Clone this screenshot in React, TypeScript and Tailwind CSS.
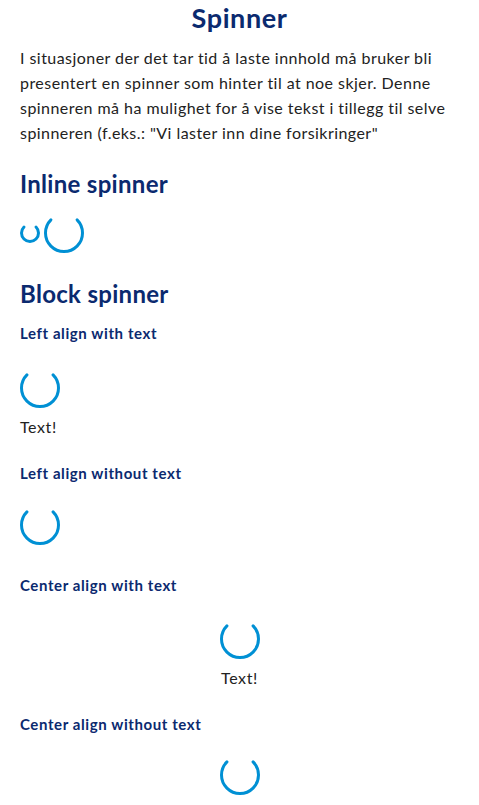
import React from "react";

const BLUE = "#0090d4";

function Spinner({ size = 40 }: { size?: number }) {
  const sw = 3;
  const r = size / 2 - sw / 2;
  const c = size / 2;
  const d = r * Math.SQRT1_2;
  return (
    <svg width={size} height={size} viewBox={`0 0 ${size} ${size}`} className="block shrink-0">
      <path
        d={`M ${c - d} ${c - d} A ${r} ${r} 0 1 0 ${c + d} ${c - d}`}
        fill="none"
        stroke={BLUE}
        strokeWidth={sw}
        strokeLinecap="round"
      />
    </svg>
  );
}

export default function App() {
  return (
    <div
      className="px-5 pt-[1px] bg-white min-h-[805px] text-[#222]"
      style={{ fontFamily: "Lato, 'Open Sans', sans-serif" }}
    >
      <h1 className="text-[27px] leading-[33px] font-bold text-center text-[#0b2a6f] tracking-[0.6px]">Spinner</h1>
      <p className="mt-[11px] text-[16px] leading-[25px] tracking-[0.45px]">
        I situasjoner der det tar tid å laste innhold må bruker bli presentert en spinner som hinter til at noe
        skjer. Denne spinneren må ha mulighet for å vise tekst i tillegg til selve spinneren (f.eks.: "Vi laster
        inn dine forsikringer"
      </p>
      <h2 className="mt-[24px] text-[24px] leading-[30px] font-bold text-[#0b2a6f] tracking-[0.3px]">Inline spinner</h2>
      <div className="mt-[14px] flex items-center gap-1 h-[40px]">
        <Spinner size={20} />
        <Spinner size={40} />
      </div>
      <h2 className="mt-[26px] text-[24px] leading-[30px] font-bold text-[#0b2a6f] tracking-[0.3px]">Block spinner</h2>
      <h3 className="mt-[14px] text-[15px] leading-[20px] font-bold text-[#0b2a6f] tracking-[0.6px]">Left align with text</h3>
      <div className="mt-[25px]">
        <Spinner />
      </div>
      <div className="mt-[7px] text-[16px] leading-[24px] tracking-[0.6px]">Text!</div>
      <h3 className="mt-[24px] text-[15px] leading-[20px] font-bold text-[#0b2a6f] tracking-[0.6px]">Left align without text</h3>
      <div className="mt-[22px]">
        <Spinner />
      </div>
      <h3 className="mt-[30px] text-[15px] leading-[20px] font-bold text-[#0b2a6f] tracking-[0.6px]">Center align with text</h3>
      <div className="mt-[24px] flex flex-col items-center">
        <Spinner />
        <div className="mt-[7px] text-[16px] leading-[24px] tracking-[0.6px]">Text!</div>
      </div>
      <h3 className="mt-[24px] text-[15px] leading-[20px] font-bold text-[#0b2a6f] tracking-[0.6px]">Center align without text</h3>
      <div className="mt-[21px] flex justify-center">
        <Spinner />
      </div>
    </div>
  );
}
